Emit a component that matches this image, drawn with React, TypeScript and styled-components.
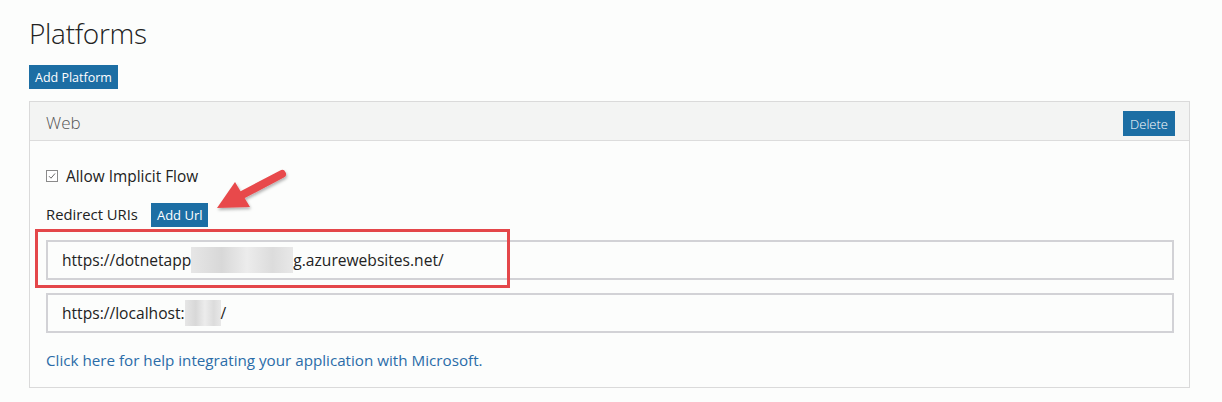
import React from "react";
import styled, { createGlobalStyle } from "styled-components";

const Global = createGlobalStyle`
  html, body { margin: 0; padding: 0; background: #fcfdfc; }
  body { font-family: "Open Sans", "Noto Sans", "Liberation Sans", sans-serif; color: #222; }
`;

const Page = styled.div`
  position: relative;
  width: 1222px;
  height: 402px;
  padding: 14px 32px 0 29px;
  box-sizing: border-box;
  overflow: hidden;
`;

const Title = styled.h1`
  margin: 0;
  font-size: 28px;
  font-weight: 300;
  line-height: 38px;
  color: #222;
  letter-spacing: -0.3px;
`;

const Button = styled.button`
  display: inline-flex;
  align-items: center;
  justify-content: center;
  height: 24px;
  padding: 0 6px;
  border: none;
  background: #1c6ea4;
  color: #fff;
  font-family: inherit;
  font-size: 12.5px;
  cursor: pointer;
`;

const TopBar = styled.div`
  margin-top: 13px;
  display: flex;
`;

const Panel = styled.section`
  margin-top: 12px;
  width: 1161px;
  height: 287px;
  box-sizing: border-box;
  border: 1px solid #dadada;
  display: flex;
  flex-direction: column;
`;

const PanelHeader = styled.div`
  height: 39px;
  box-sizing: border-box;
  background: #f3f4f3;
  border-bottom: 1px solid #dcdcdc;
  display: flex;
  align-items: center;
  justify-content: space-between;
  padding: 0 14px 0 16px;
`;

const HeaderTitle = styled.span`
  font-size: 17px;
  font-weight: 300;
  color: #555;
  margin-top: 2px;
`;

const DeleteButton = styled(Button)`
  height: 25px;
  margin-top: 5px;
  padding: 0 7px;
  font-size: 13px;
  font-weight: 300;
`;

const PanelBody = styled.div`
  padding: 25px 15px 0 16px;
  display: flex;
  flex-direction: column;
`;

const CheckRow = styled.label`
  display: flex;
  align-items: center;
  gap: 8px;
  font-size: 15.4px;
  height: 20px;
`;

const CheckBox = styled.span`
  width: 10px;
  height: 10px;
  border: 1px solid #8a8a8a;
  background: #fff;
  display: inline-flex;
  align-items: center;
  justify-content: center;
`;

const RedirectRow = styled.div`
  margin-top: 16px;
  display: flex;
  align-items: center;
  gap: 13px;
  font-size: 14.8px;
  height: 24px;
`;

const AddUrl = styled(Button)`
  margin-top: 2px;
  padding: 0 6px;
  font-size: 13px;
`;

const Highlight = styled.div`
  position: relative;
  margin-top: 14px;
`;

const RedBox = styled.div`
  position: absolute;
  left: -11px;
  top: -11px;
  width: 475px;
  height: 59px;
  box-sizing: border-box;
  border: 3px solid #e4474a;
  pointer-events: none;
`;

const UrlInput = styled.div`
  height: 40px;
  box-sizing: border-box;
  border: 2px solid #d2d2d6;
  background: #fcfdfc;
  display: flex;
  align-items: center;
  padding-left: 14px;
  font-size: 15.6px;
  color: #222;
`;

const Inputs = styled.div`
  display: flex;
  flex-direction: column;
  gap: 13px;
`;

const Blur = styled.span<{ $w: number }>`
  display: inline-block;
  width: ${(p) => p.$w}px;
  height: 26px;
  background: linear-gradient(90deg, #e6e6e6, #d8d8d8 30%, #ececec 55%, #dcdcdc 80%, #e8e8e8);
`;

const HelpLink = styled.a`
  margin-top: 17px;
  font-size: 15.2px;
  color: #2a6ca8;
  text-decoration: none;
`;

const Arrow = styled.svg`
  position: absolute;
  left: 210px;
  top: 160px;
  overflow: visible;
`;

export default function App() {
  return (
    <Page>
      <Global />
      <Title>Platforms</Title>
      <TopBar>
        <Button>Add Platform</Button>
      </TopBar>
      <Panel>
        <PanelHeader>
          <HeaderTitle>Web</HeaderTitle>
          <DeleteButton>Delete</DeleteButton>
        </PanelHeader>
        <PanelBody>
          <CheckRow>
            <CheckBox>
              <svg width="8" height="8" viewBox="0 0 8 8">
                <path d="M1 4.2 L3 6.2 L7 1.5" fill="none" stroke="#666" strokeWidth="1" />
              </svg>
            </CheckBox>
            Allow Implicit Flow
          </CheckRow>
          <RedirectRow>
            Redirect URIs
            <AddUrl>Add Url</AddUrl>
          </RedirectRow>
          <Highlight>
            <Inputs>
              <UrlInput>
                https://dotnetapp<Blur $w={102} />g.azurewebsites.net/
              </UrlInput>
              <UrlInput>
                https://localhost:<Blur $w={36} />/
              </UrlInput>
            </Inputs>
            <RedBox />
          </Highlight>
          <HelpLink href="#">Click here for help integrating your application with Microsoft.</HelpLink>
        </PanelBody>
      </Panel>
      <Arrow width="90" height="60" viewBox="0 0 90 60">
        <defs>
          <filter id="sh" x="-20%" y="-20%" width="150%" height="150%">
            <feDropShadow dx="1" dy="2" stdDeviation="1.5" floodColor="#000" floodOpacity="0.3" />
          </filter>
        </defs>
        <g filter="url(#sh)">
          <line x1="72" y1="14" x2="32" y2="35" stroke="#e8494b" strokeWidth="8" strokeLinecap="round" />
          <polygon points="7,48 25,22 40,47" fill="#e8494b" />
        </g>
      </Arrow>
    </Page>
  );
}
